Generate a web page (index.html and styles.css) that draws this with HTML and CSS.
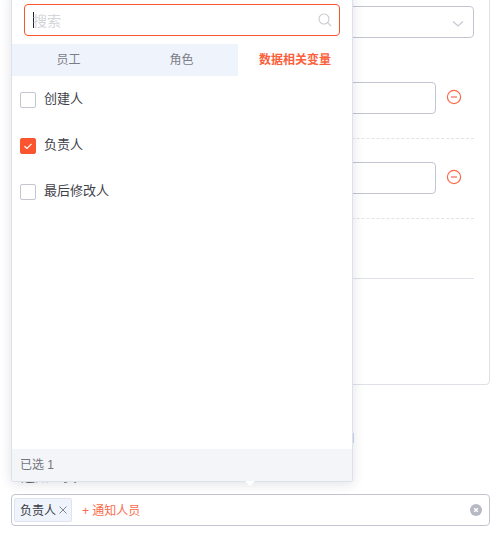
FILE: index.html
```html
<!DOCTYPE html>
<html lang="zh">
<head>
<meta charset="utf-8">
<title>通知人员</title>
<link rel="stylesheet" href="styles.css">
</head>
<body>
<div class="page">
  <section class="panel">
    <div class="select-row">
      <div class="field select">
        <svg class="chev" viewBox="0 0 12 8" width="12" height="8"><path d="M1 1.500 6 6l5-4.500"/></svg>
      </div>
    </div>
    <div class="cond-row">
      <div class="field"></div>
      <svg class="minus" viewBox="0 0 16 16" width="16" height="16"><circle cx="8" cy="8" r="6.600"/><path d="M5 8h6"/></svg>
    </div>
    <div class="cond-row">
      <div class="field"></div>
      <svg class="minus" viewBox="0 0 16 16" width="16" height="16"><circle cx="8" cy="8" r="6.600"/><path d="M5 8h6"/></svg>
    </div>
    <div class="rule"></div>
  </section>
  <label class="notify-label">通知人员</label>
  <div class="tag-input">
    <span class="tag">负责人<svg class="tag-x" viewBox="0 0 8 8" width="8" height="8"><path d="M.5.500l7 7M7.500.500l-7 7"/></svg></span>
    <span class="add">+ 通知人员</span>
    <svg class="clear" viewBox="0 0 12 12" width="12" height="12"><circle cx="6" cy="6" r="6"/><path d="M4.200 4.200l3.600 3.600M7.800 4.200 4.200 7.800"/></svg>
  </div>
  <span class="stray"></span>

  <div class="popover">
    <div class="search">
      <span class="caret"></span>
      <span class="placeholder">搜索</span>
      <svg class="search-icon" viewBox="0 0 14 14" width="14" height="14"><circle cx="6" cy="6" r="5"/><path d="m9.800 9.800 3.200 3.200"/></svg>
    </div>
    <div class="tabs">
      <div class="tab">员工</div>
      <div class="tab">角色</div>
      <div class="tab active">数据相关变量</div>
    </div>
    <ul class="options">
      <li class="option"><span class="box"></span>创建人</li>
      <li class="option"><span class="box checked"><svg viewBox="0 0 10 10" width="10" height="10"><path d="M1.500 5.200 4 7.500 8.500 2.800"/></svg></span>负责人</li>
      <li class="option"><span class="box"></span>最后修改人</li>
    </ul>
    <div class="footer">已选 1</div>
    <span class="arrow"></span>
  </div>
</div>
</body>
</html>
```
FILE: styles.css
```css
* { box-sizing: border-box; }
html, body { margin: 0; padding: 0; background: #fff; }
body {
  font-family: "Liberation Sans", "Noto Sans CJK SC", sans-serif;
  color: #33353c;
  font-size: 12px;
}
.page {
  position: relative;
  width: 496px;
  height: 545px;
  overflow: hidden;
  padding: 0 6px 0 11px;
}
.panel {
  height: 395px;
  margin-top: -10px;
  padding: 15px 15px 0 16px;
  border: 1px solid #dfe0e8;
  border-radius: 4px;
}
.field {
  height: 32px;
  flex: 1;
  border: 1px solid #c2c5cf;
  border-radius: 4px;
  background: #fff;
}
.select-row { display: flex; height: 76px; }
.select { display: flex; justify-content: flex-end; align-items: center; padding: 3px 9px 0 0; }
.chev { fill: none; stroke: #c5c8d0; stroke-width: 1.200; }
.cond-row {
  display: flex;
  align-items: flex-start;
  gap: 10px;
  height: 57px;
  margin-bottom: 23px;
  border-bottom: 1px dashed #e2e3e8;
}
.minus { margin: 7px 12px 0 0; flex: none; fill: none; stroke: #fb6a4a; stroke-width: 1.200; }
.rule { margin-top: -23px; padding-top: 59px; border-bottom: 1px solid #dfe0e8; }
.notify-label {
  display: block;
  margin: 81px 0 0 10px;
  height: 20px;
  line-height: 20px;
  font-size: 14px;
  color: #5f6169;
}
.tag-input {
  display: flex;
  align-items: center;
  height: 32px;
  margin-top: 8px;
  padding: 0 7px 0 2px;
  border: 1px solid #c2c5cf;
  border-radius: 4px;
}
.tag {
  display: flex;
  align-items: center;
  gap: 3px;
  height: 24px;
  padding: 0 4px 2px 5px;
  background: #eff3fb;
  border: 1px solid #e0e4ee;
  border-radius: 2px;
  color: #3a3c44;
}
.tag-x { fill: none; stroke: #84878f; stroke-width: 1; margin-top: 2px; }
.add { margin-left: 10px; padding-bottom: 2px; color: #fb6a4a; flex: 1; }
.clear { flex: none; }
.clear circle { fill: #b7bac4; }
.clear path { fill: none; stroke: #fff; stroke-width: 1.400; }
.stray {
  position: absolute;
  left: 353px;
  top: 433px;
  width: 1px;
  height: 10px;
  background: #c6d8f0;
}
.popover {
  position: absolute;
  left: 11px;
  top: -8px;
  width: 342px;
  height: 490px;
  display: flex;
  flex-direction: column;
  background: #fff;
  border: 1px solid #dde1ea;
  border-radius: 2px;
  box-shadow: 0 2px 12px rgba(40, 50, 80, 0.14);
}
.search {
  position: relative;
  display: flex;
  align-items: center;
  height: 32px;
  margin: 11px 12px 8px 12px;
  padding: 0 7px 0 8px;
  border: 1px solid #fb5530;
  border-radius: 4px;
  font-size: 14px;
}
.caret { width: 1px; height: 16px; background: #222; margin-right: -1px; }
.placeholder { flex: 1; padding-bottom: 1px; color: #d3d5da; }
.search-icon { fill: none; stroke: #c8cad2; stroke-width: 1.100; }
.tabs { display: flex; height: 32px; }
.tab {
  width: 113px;
  background: #eff3fb;
  color: #7b7e87;
  text-align: center;
  line-height: 32px;
}
.tab.active {
  flex: 1;
  background: #fff;
  color: #fb5f3c;
  font-weight: 700;
}
.options { flex: 1; list-style: none; margin: -2px 0 0; padding: 0; }
.option {
  display: flex;
  align-items: center;
  gap: 8px;
  height: 46px;
  padding-left: 8px;
  font-size: 13px;
  color: #3f4149;
}
.box {
  display: flex;
  align-items: center;
  justify-content: center;
  width: 16px;
  height: 16px;
  margin-top: 6px;
  border: 1px solid #c4c7d0;
  border-radius: 2px;
  background: #fff;
}
.box.checked { background: #fb5530; border-color: #fb5530; }
.box svg { fill: none; stroke: #fff; stroke-width: 1.200; }
.footer {
  height: 32px;
  padding-left: 8px;
  line-height: 32px;
  background: #f3f5f9;
  color: #74767e;
}
.arrow {
  position: absolute;
  left: 233px;
  bottom: -5px;
  width: 0;
  height: 0;
  border-left: 5px solid transparent;
  border-right: 5px solid transparent;
  border-top: 5px solid #fff;
}
```
